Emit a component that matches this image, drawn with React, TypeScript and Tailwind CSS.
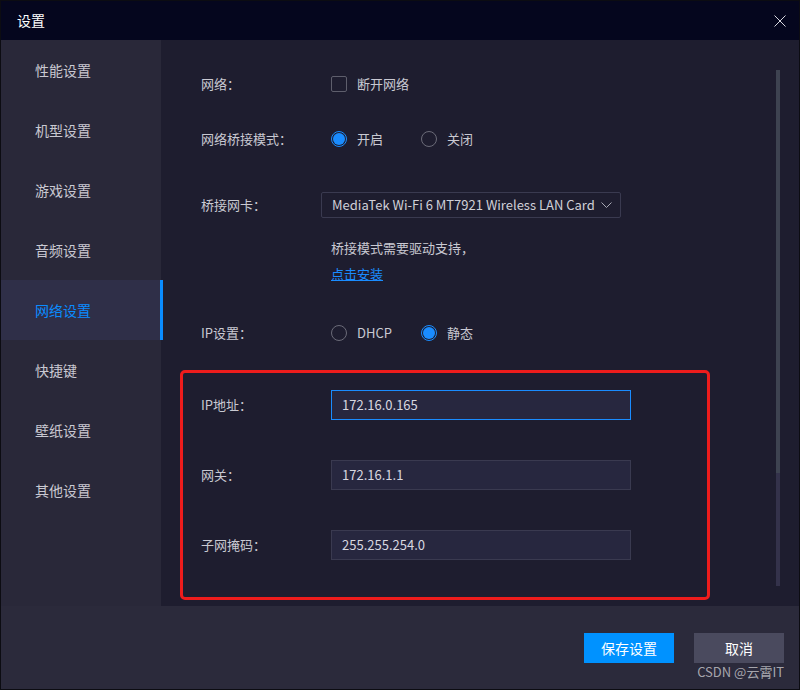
import React from "react";

const menuItems = [
  "性能设置",
  "机型设置",
  "游戏设置",
  "音频设置",
  "网络设置",
  "快捷键",
  "壁纸设置",
  "其他设置",
];

const Radio = ({ checked }: { checked: boolean }) =>
  checked ? (
    <span className="flex h-4 w-4 items-center justify-center rounded-full border border-[#1a8cff]">
      <span className="h-[12px] w-[12px] rounded-full bg-[#1a8cff]" />
    </span>
  ) : (
    <span className="h-4 w-4 rounded-full border border-[#6b6b78]" />
  );

const TextInput = ({ value, focused }: { value: string; focused?: boolean }) => (
  <div
    className={`flex h-[30px] w-[300px] items-center border bg-[#27273f] pl-[10px] text-[13px] text-[#d8d8e0] ${
      focused ? "border-[#1a8cff]" : "border-[#3a3a50]"
    }`}
  >
    {value}
  </div>
);

export default function App() {
  return (
    <div
      className="relative flex h-[690px] w-[800px] flex-col border border-[#0c0c12] bg-[#1e1d2f] text-[#c9c9d2]"
      style={{ fontFamily: '"Noto Sans CJK SC", "Noto Sans", sans-serif' }}
    >
      {/* title bar */}
      <div className="flex h-[39px] items-center justify-between bg-[#05061e] pl-[16px] pr-[13px]">
        <span className="text-[14px] text-white">设置</span>
        <svg width="12" height="12" viewBox="0 0 12 12" className="text-[#d8d8e0]">
          <path d="M0.5 0.5L11.5 11.5M11.5 0.5L0.5 11.5" stroke="currentColor" strokeWidth="1" />
        </svg>
      </div>

      <div className="flex flex-1">
        {/* sidebar */}
        <div className="flex w-[160px] flex-col bg-[#292839]">
          {menuItems.map((item) => {
            const active = item === "网络设置";
            return (
              <div
                key={item}
                className={`flex h-[60px] items-center pl-[34px] text-[14px] ${
                  active
                    ? "border-r-[3px] border-[#0a8cff] bg-[#2f2f48] text-[#0a8cff] -mr-[2px]"
                    : "text-[#c9c9d2]"
                }`}
              >
                {item}
              </div>
            );
          })}
        </div>

        {/* content */}
        <div className="flex flex-1">
          <div className="flex flex-1 flex-col pl-[40px] pt-[29px] text-[13px]">
            <div className="flex h-[30px] items-center">
              <span className="w-[130px]">网络：</span>
              <span className="h-4 w-4 rounded-[2px] border border-[#5e5e6c]" />
              <span className="ml-[10px]">断开网络</span>
            </div>

            <div className="mt-[25px] flex h-[30px] items-center">
              <span className="w-[130px]">网络桥接模式：</span>
              <Radio checked />
              <span className="ml-[10px] w-[64px]">开启</span>
              <Radio checked={false} />
              <span className="ml-[10px]">关闭</span>
            </div>

            <div className="mt-[38px] flex h-[26px] items-center">
              <span className="w-[120px]">桥接网卡：</span>
              <div className="flex h-[26px] w-[300px] items-center justify-between rounded-[2px] border border-[#3a3a50] pl-[10px] pr-[8px] text-[#d0d0d8]">
                <span className="whitespace-nowrap">MediaTek Wi-Fi 6 MT7921 Wireless LAN Card</span>
                <svg width="11" height="6" viewBox="0 0 11 6" className="text-[#a8a8b4]">
                  <path d="M0.5 0.5L5.5 5.5L10.5 0.5" stroke="currentColor" fill="none" strokeWidth="1" />
                </svg>
              </div>
            </div>

            <div className="mt-[20px] pl-[130px] leading-[20px]">桥接模式需要驱动支持，</div>
            <div className="mt-[6px] pl-[130px] leading-[20px]">
              <span className="text-[#1a8cff] underline">点击安装</span>
            </div>

            <div className="mt-[34px] flex h-[30px] items-center">
              <span className="w-[130px]">IP设置：</span>
              <Radio checked={false} />
              <span className="ml-[10px] w-[64px]">DHCP</span>
              <Radio checked />
              <span className="ml-[10px]">静态</span>
            </div>

            <div className="-ml-[21px] mt-[22px] flex h-[230px] w-[530px] flex-col gap-[40px] rounded-[5px] border-[3px] border-[#ee1c1c] pl-[18px] pt-[17px]">
              <div className="flex h-[30px] items-center">
                <span className="w-[130px]">IP地址：</span>
                <TextInput value="172.16.0.165" focused />
              </div>
              <div className="flex h-[30px] items-center">
                <span className="w-[130px]">网关：</span>
                <TextInput value="172.16.1.1" />
              </div>
              <div className="flex h-[30px] items-center">
                <span className="w-[130px]">子网掩码：</span>
                <TextInput value="255.255.254.0" />
              </div>
            </div>
          </div>

          {/* scrollbar */}
          <div className="mr-[19px] mt-[30px] flex h-[516px] w-[4px] flex-col">
            <div className="h-[403px] bg-[#3e4351]" />
            <div className="flex-1 bg-[#34324b]" />
          </div>
        </div>
      </div>

      {/* footer */}
      <div className="flex h-[83px] items-start justify-end gap-[20px] bg-[#2b2a3b] pr-[15px] pt-[27px]">
        <button className="h-[30px] w-[90px] bg-[#0092ff] text-[14px] text-white">保存设置</button>
        <button className="h-[30px] w-[90px] bg-[#4a4a5e] text-[14px] text-white">取消</button>
      </div>

      <span className="absolute bottom-[8px] right-[15px] text-[13px] text-[#c8c8cc]/80">CSDN @云霄IT</span>
    </div>
  );
}
